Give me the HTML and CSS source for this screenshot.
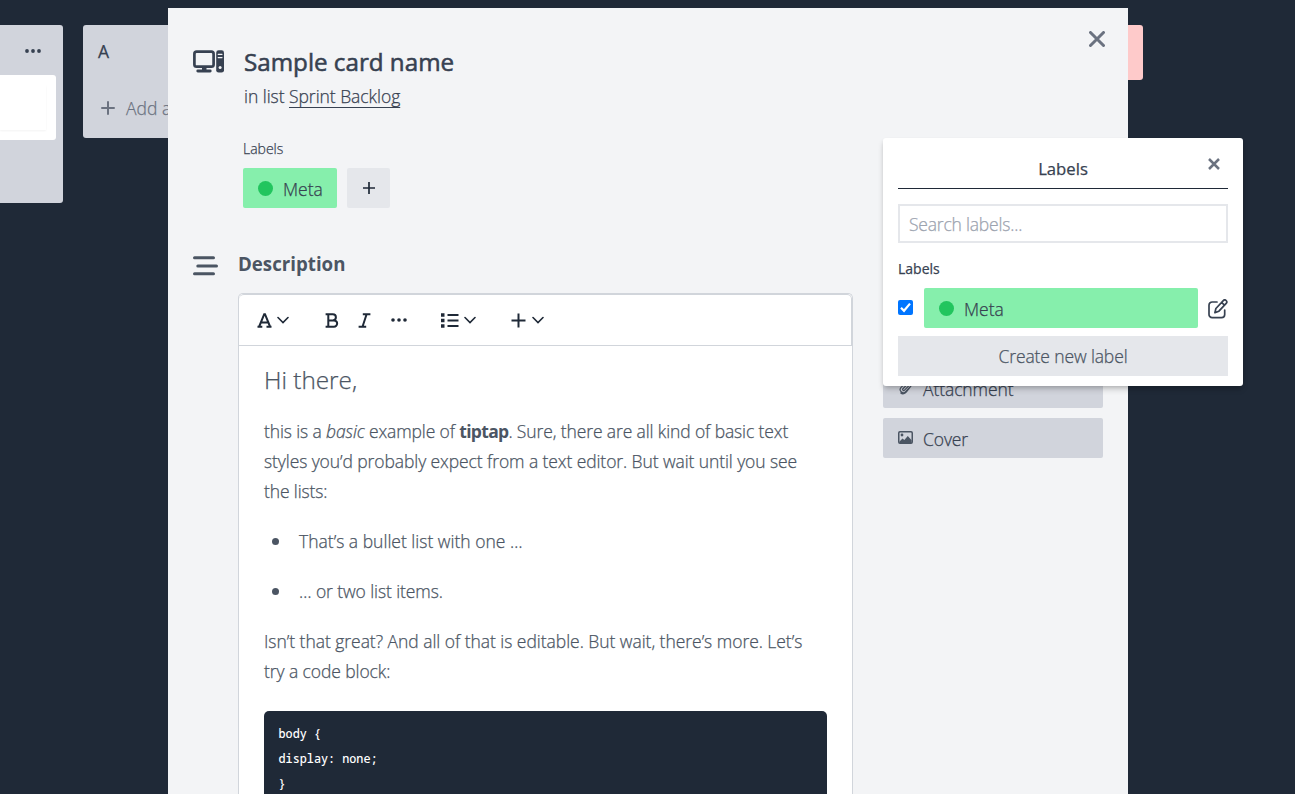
FILE: index.html
```html
<!DOCTYPE html>
<html lang="en">
<head>
<meta charset="utf-8">
<title>Sample card name</title>
<link rel="stylesheet" href="styles.css">
</head>
<body>
<main class="board">
  <section class="list list-first">
    <svg class="list-menu" viewBox="0 0 16 4" width="16" height="4"><circle cx="2" cy="2" r="1.9"/><circle cx="8" cy="2" r="1.9"/><circle cx="14" cy="2" r="1.9"/></svg>
    <div class="list-card"><div class="list-card-inner"></div></div>
  </section>
  <section class="list list-a">
    <h2 class="list-title">A</h2>
    <button class="list-add"><svg viewBox="0 0 14 14" width="14" height="14"><path d="M7 1v12M1 7h12"/></svg><span>Add a card</span></button>
  </section>
  <section class="list-danger"></section>
</main>

<article class="modal">
  <button class="modal-close"><svg viewBox="0 0 16 16" width="16" height="16"><path d="M1.5 1.5l13 13M14.500 1.500l-13 13"/></svg></button>
  <header class="card-head">
    <svg class="card-icon" viewBox="0 0 31 23" width="31" height="23">
      <rect class="line" x="1.400" y="1.700" width="19.200" height="15" rx="2.200"/>
      <path class="solid" d="M9 17h4.500v2.500h3.700a1.400 1.400 0 0 1 0 2.900H4.800a1.400 1.400 0 0 1 0-2.900H9z"/>
      <rect class="solid" x="23.200" y=".3" width="7.800" height="22.300" rx="2.400"/>
      <path class="slot" d="M25.200 4.300h3.800M25.200 7.600h3.800"/>
      <circle class="dot" cx="27.100" cy="17.400" r="1.500"/>
    </svg>
    <div>
      <h1 class="card-title">Sample card name</h1>
      <p class="card-list">in list <a class="card-link">Sprint Backlog</a></p>
    </div>
  </header>
  <div class="modal-body">
    <div class="content">
      <section class="labels">
        <h3 class="labels-title">Labels</h3>
        <div class="labels-row">
          <span class="label"><i class="label-dot"></i><span class="t-meta">Meta</span></span>
          <button class="label-add"><svg viewBox="0 0 12 12" width="12" height="12"><path d="M6 0v12M0 6h12"/></svg></button>
        </div>
      </section>
      <div class="desc-head">
        <svg viewBox="0 0 26 20" width="26" height="20"><path d="M1.500 1.800h19M4.800 10h18.700M1.500 17.800h19"/></svg>
        <h2 class="desc-title">Description</h2>
      </div>
      <div class="editor">
        <div class="toolbar">
          <span class="tool tool-a">
            <svg viewBox="0 0 15 15" width="15" height="15"><path d="M2.200 13.500L7.200 1.200h.8l5 12.300M4 9.500h7.200M.5 13.700h4.800M9.500 13.700h5"/></svg>
            <svg class="chev" viewBox="0 0 12 8" width="12" height="8"><path d="M1 1.500l5 5 5-5"/></svg>
          </span>
          <span class="tool tool-b">
            <svg viewBox="0 0 14 15" width="14" height="15"><path d="M.6 1.200h7.200a3.100 3.100 0 0 1 0 6.200H3.300M8 7.400h1a3.150 3.150 0 0 1 0 6.300H.6M3.300 1.200v12.500"/></svg>
          </span>
          <span class="tool tool-i">
            <svg viewBox="0 0 13 15" width="13" height="15"><path d="M4.800 1.200h7.600M.6 13.700h7.600M8.600 1.200L4.500 13.700"/></svg>
          </span>
          <span class="tool tool-more">
            <svg class="fill" viewBox="0 0 16 4" width="16" height="4"><circle cx="2" cy="2" r="1.800"/><circle cx="8" cy="2" r="1.800"/><circle cx="14" cy="2" r="1.800"/></svg>
          </span>
          <span class="tool tool-list">
            <svg viewBox="0 0 18 15" width="18" height="15"><path d="M6.500 2h11M6.500 7.500h11M6.500 13h11"/><path class="bullets" d="M0 2h3.500M0 7.500h3.500M0 13h3.500"/></svg>
            <svg class="chev" viewBox="0 0 12 8" width="12" height="8"><path d="M1 1.500l5 5 5-5"/></svg>
          </span>
          <span class="tool tool-plus">
            <svg viewBox="0 0 15 15" width="15" height="15"><path d="M7.500 .5v14M.5 7.500h14"/></svg>
            <svg class="chev" viewBox="0 0 12 8" width="12" height="8"><path d="M1 1.500l5 5 5-5"/></svg>
          </span>
        </div>
        <div class="prose">
          <h2 class="greeting">Hi there,</h2>
          <p><span class="tight">this is a <em>basic</em> example of <strong>tiptap</strong>. Sure, there are all kind of basic text</span><br><span class="snug">styles you’d probably expect from a text editor. But wait until you see</span><br><span class="tight">the lists:</span></p>
          <ul>
            <li><span>That’s a bullet list with one …</span></li>
            <li><span class="snug">… or two list items.</span></li>
          </ul>
          <p><span class="near">Isn’t that great? And all of that is editable. But wait, there’s more. Let’s</span><br><span class="snug">try a code block:</span></p>
          <pre class="code">body {
display: none;
}</pre>
        </div>
      </div>
    </div>
    <aside class="actions">
      <button class="action">
        <svg viewBox="0 0 16 16" width="15" height="15"><path class="clip" d="M13.500 6.800l-5.700 5.900a3.300 3.300 0 0 1-4.700-4.600l6-6.100a2.300 2.300 0 0 1 3.300 3.200L7 10.800a1.100 1.100 0 0 1-1.700-1.500l4.500-4.700M14.500 5.500L9 12.700c-1.500 1.800-4 3-6 1.200"/></svg>
        <span class="snug">Attachment</span>
      </button>
      <button class="action">
        <svg viewBox="0 0 15 13" width="15" height="13"><rect class="frame" x=".75" y=".75" width="13.500" height="11.500" rx="1.200"/><circle class="solid" cx="4" cy="4" r="1.400"/><path class="solid" d="M1.500 12V10.500L4.500 7.500l1.800 1.600L9.800 5l3.800 4.300V12z"/></svg>
        <span class="tight">Cover</span>
      </button>
    </aside>
  </div>
</article>

<section class="popup">
  <header class="popup-head">
    <h2 class="popup-title">Labels</h2>
    <button class="popup-close"><svg viewBox="0 0 12 12" width="12" height="12"><path d="M1 1l10 10M11 1L1 11"/></svg></button>
  </header>
  <input class="search" type="text" placeholder="Search labels...">
  <h3 class="popup-sub">Labels</h3>
  <div class="popup-row">
    <span class="check"><svg viewBox="0 0 15 15" width="15" height="15"><path d="M3 7.800l3 3L12 3.600"/></svg></span>
    <span class="label label-wide"><i class="label-dot"></i><span class="t-meta">Meta</span></span>
    <svg class="edit" viewBox="0 0 20 20" width="20" height="20"><path d="M9 3H4.200A3.200 3.200 0 0 0 1 6.200v9.100A3.200 3.200 0 0 0 4.200 18.700h9.300a3.200 3.200 0 0 0 3.200-3.200V11"/><path d="M15.300 1.600a1.900 1.900 0 0 1 2.900 2.700l-7.300 7.900-4 1.400 1-4.100zM13.600 3.400l2.800 2.700"/></svg>
  </div>
  <button class="create"><span class="tight">Create new label</span></button>
</section>
</body>
</html>
```

FILE: styles.css
```css
* { box-sizing: border-box; }
body {
  margin: 0;
  height: 794px;
  overflow: hidden;
  position: relative;
  background: #1f2937;
  color: #374151;
  font: 300 17.500px/24px "Open Sans", "Noto Sans", sans-serif;
  -webkit-text-stroke: .25px currentColor;
}
h1, h2, h3, p, ul, pre { margin: 0; padding: 0; font-weight: inherit; font-size: inherit; }
button { border: 0; padding: 0; background: none; font: inherit; color: inherit; }
svg { display: block; flex: none; fill: none; stroke: currentColor; stroke-linecap: round; stroke-linejoin: round; }
span { white-space: nowrap; }
.near { letter-spacing: -.04px; }
.snug { letter-spacing: -.09px; }
.tight { letter-spacing: -.12px; }

/* Board */
.board { display: flex; align-items: flex-start; padding-top: 25px; }
.list { background: #d1d4dc; flex: none; border-radius: 3px; }
.list-first { width: 63px; height: 178px; margin-right: 20px; border-radius: 0 3px 3px 0; padding: 24px 7px 0 0; }
.list-menu { margin: 0 0 22px 25px; fill: #374151; stroke: none; }
.list-card { height: 65px; background: #fff; border-radius: 0 3px 3px 0; padding: 10px 10px 10px 0; }
.list-card-inner { height: 45px; box-shadow: 0 1px 2px rgba(0, 0, 0, .05); }
.list-a { width: 340px; height: 113px; padding: 14px 15px; }
.list-title { font-weight: 400; line-height: 24px; }
.list-add { display: flex; align-items: center; gap: 11px; margin: 33px 0 0 3px; color: #6b7280; }
.list-add svg { stroke-width: 2; }
.list-danger { width: 340px; height: 55px; margin-left: 380px; background: #fecaca; border-radius: 3px; }

/* Card modal */
.modal { position: absolute; left: 168px; top: 8px; width: 960px; height: 786px; display: flex; flex-direction: column; overflow: hidden; background: #f3f4f6; padding: 35px 25px 0; }
.modal-close { position: absolute; right: 23px; top: 22.500px; color: #6b7280; }
.modal-close svg { stroke-width: 3; }
.card-head { display: flex; gap: 20px; }
.card-icon { margin-top: 7px; color: #374151; }
.card-icon .line { stroke-width: 2.700; }
.card-icon .solid { fill: #374151; stroke: none; }
.card-icon .slot { stroke: #f3f4f6; stroke-width: 1.200; }
.card-icon .dot { fill: #f3f4f6; stroke: none; }
.card-title { font-size: 24.200px; font-weight: 400; line-height: 38px; white-space: nowrap; -webkit-text-stroke-width: .55px; }
.card-list { margin-top: 3px; letter-spacing: -.04px; }
.card-link { text-decoration: underline; text-underline-offset: 4px; text-decoration-thickness: 1px; }
.modal-body { display: flex; gap: 30px; flex: 1; min-height: 0; }
.content { width: 660px; display: flex; flex-direction: column; }
.labels { padding: 31px 0 0 50px; }
.labels-title { font-size: 14px; line-height: 20px; }
.labels-row { display: flex; gap: 10px; margin-top: 9px; }
.label { display: flex; align-items: center; gap: 10px; width: 94px; height: 40px; padding-left: 15px; background: #86efac; border-radius: 2px; }
.label-dot { width: 15px; height: 15px; border-radius: 50%; background: #22c55e; }
.t-meta { position: relative; top: 1px; }
.label-add { width: 43px; height: 40px; display: grid; place-items: center; background: #e5e7eb; border-radius: 2px; color: #1f2937; }
.label-add svg { stroke-width: 1.700; stroke-linecap: butt; }
.desc-head { display: flex; align-items: center; gap: 19px; margin-top: 41px; height: 30px; flex: none; color: #4b5563; }
.desc-head svg { stroke-width: 3; margin-top: 3px; }
.desc-title { font-size: 18.700px; font-weight: 700; -webkit-text-stroke-width: 0; }

/* Editor */
.editor { margin: 14px 0 0 45px; width: 615px; flex: 1; min-height: 0; overflow: hidden; border: 1px solid #d1d5db; border-bottom: 0; border-radius: 5px 5px 0 0; background: #fff; color: #4b5563; }
.toolbar { height: 52px; display: flex; align-items: center; padding-left: 18px; border-top: 1px solid #d1d5db; border-bottom: 1px solid #d1d5db; border-right: 1px solid #d1d5db; border-radius: 5px 5px 0 0; color: #1f2937; }
.tool { display: flex; align-items: center; }
.tool svg { stroke-width: 2; stroke-linecap: butt; stroke-linejoin: miter; }
.tool .chev { stroke-width: 1.600; stroke-linecap: round; }
.tool .fill { fill: currentColor; stroke: none; }
.tool .bullets { stroke-width: 3.500; }
.tool-a { gap: 5px; }
.tool-b { margin-left: 36px; }
.tool-i { margin-left: 19px; }
.tool-more { margin-left: 20px; }
.tool-list { margin-left: 34px; gap: 5px; }
.tool-plus { margin-left: 35px; gap: 6px; }
.prose { padding: 19px 25px 0; line-height: 30px; }
.greeting { font-size: 24.300px; margin-bottom: 21px; }
.prose p { margin-bottom: 20px; }
.prose strong { font-weight: 700; letter-spacing: -.7px; -webkit-text-stroke-width: 0; }
.prose ul { padding: 0; list-style: none; }
.prose li { display: flex; align-items: center; gap: 20px; padding-left: 8px; margin-bottom: 20px; }
.prose li::before { content: ""; width: 7px; height: 7px; border-radius: 50%; background: #4b5563; margin-top: 1px; }
.code { margin-top: 25px; height: 140px; border-radius: 5px; background: #1f2937; color: #fff; padding: 10px 14.500px; font: 500 11.800px/25px "Noto Sans Mono", "DejaVu Sans Mono", monospace; -webkit-text-stroke-width: 0; }

/* Sidebar actions */
.actions { width: 220px; padding-top: 260px; display: flex; flex-direction: column; gap: 10px; }
.action { display: flex; align-items: center; gap: 10px; height: 40px; padding-left: 15px; background: #d1d4dc; border-radius: 2px; color: #374151; }
.action svg { color: #4b5563; margin-top: -2px; }
.action .clip { stroke-width: 1.300; }
.action .frame { stroke-width: 1.500; }
.action .solid { fill: currentColor; stroke: none; }
.action span { position: relative; top: 1px; }

/* Labels popup */
.popup { position: absolute; left: 883px; top: 138px; width: 360px; height: 248px; padding: 15px 15px 0; background: #fff; border-radius: 3px; box-shadow: 0 4px 6px -1px rgba(0, 0, 0, .2), 0 2px 4px -1px rgba(0, 0, 0, .12); }
.popup-head { position: relative; height: 36px; padding-top: 4px; text-align: center; border-bottom: 1px solid #1f2937; }
.popup-title { font-weight: 400; font-size: 16.700px; }
.popup-close { position: absolute; right: 8px; top: 5px; color: #6b7280; }
.popup-close svg { stroke-width: 2.500; stroke-linecap: butt; }
.search { display: block; width: 100%; height: 39px; margin-top: 15px; border: 2px solid #e5e7eb; padding: 0 9px; background: #fff; font: inherit; letter-spacing: -.2px; outline: 0; }
.search::placeholder { color: #9ca3af; opacity: 1; }
.popup-sub { margin-top: 15px; font-size: 14px; line-height: 22px; font-weight: 400; }
.popup-row { display: flex; align-items: center; margin-top: 8px; }
.check { width: 15px; height: 15px; border-radius: 2px; background: #0075ff; color: #fff; margin: -1px 11px 0 0; }
.check svg { stroke-width: 2.200; stroke-linecap: butt; stroke-linejoin: miter; }
.label-wide { width: 274px; margin-right: 10px; }
.edit { stroke-width: 1.700; margin-top: 2px; }
.create { width: 100%; height: 40px; margin-top: 8px; background: #e5e7eb; color: #4b5563; }
```
